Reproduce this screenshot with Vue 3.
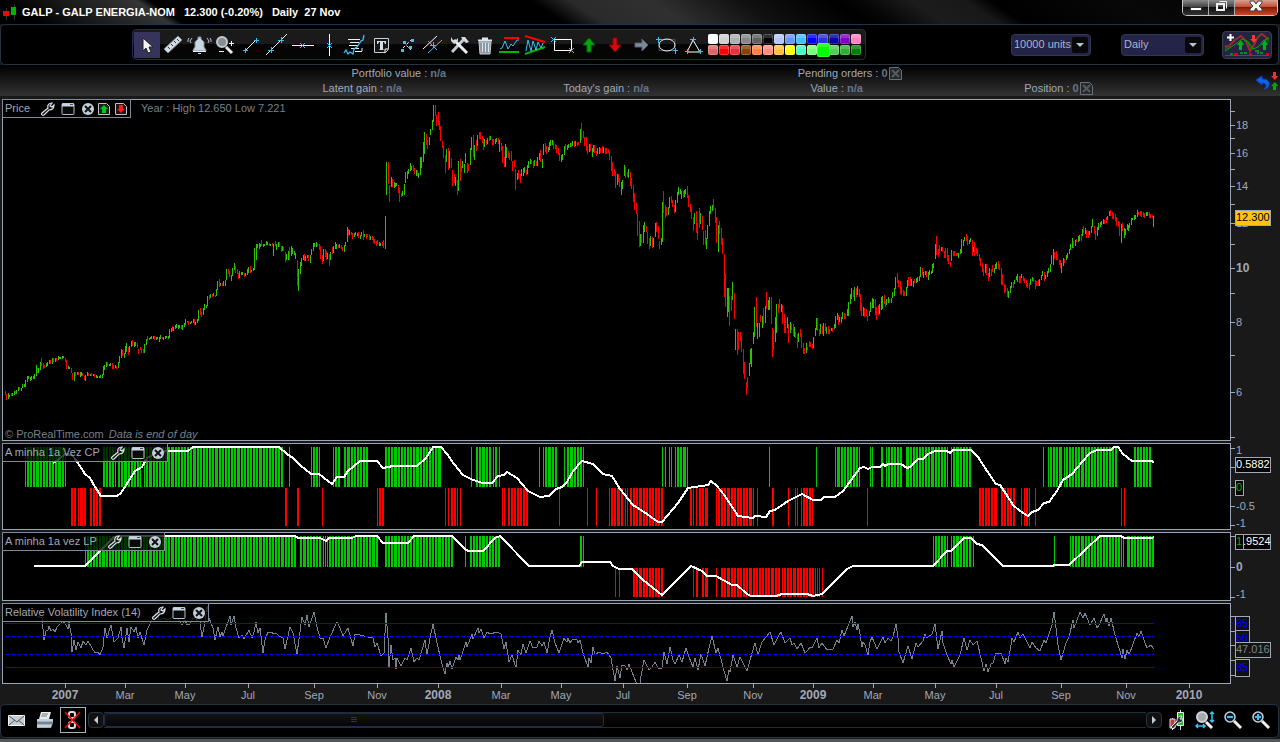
<script setup>
const ink = '#a0a8b8'

const tools = [
  { name: 'Select', body: '<path d="M9 6V19L12 16L14 21L17 20L15 15H19Z" fill="#f4f4f4" stroke="#222"/>' },
  { name: 'Ruler', body: '<path d="M4 17L18 4L22 8L8 21Z" fill="#d3dbe3" stroke="#7d8790"/><path d="M8 15l2 2M11 12l2 2M14 9l2 2M17 7l2 2" stroke="#333"/>' },
  { name: 'Alert', body: '<path d="M12 5h3v2l3 3v5l2 3v1H7v-1l2-3v-5l3-3z" fill="#c9d6e0" stroke="#7e8b96"/><path d="M7 19.500h13" stroke="#eef"/><path d="M12 21h3v1h-3z" fill="#dde"/><path d="M6 6l-2 3l1 2M3 6L2 8v2M21 6l2 3l-1 2M24 6l1 2v2" fill="none" stroke="#b8c4d0"/>' },
  { name: 'Zoom', body: '<circle cx="10" cy="10" r="5" fill="#8a8e92" stroke="#c2cad0" stroke-width="2"/><path d="M14 15l6 6" stroke="#e8eaec" stroke-width="3"/><path d="M17 11.500h5M19.500 9v5M7 19.500h5" stroke="#fff"/>' },
  { name: 'Segment', body: '<path d="M8 18L18 8" stroke="#e6eef6"/><path d="M5 18.500h5M7.500 16v5M16 8.500h5M18.500 6v5" stroke="#3cc0f8"/>' },
  { name: 'Line', body: '<path d="M2 23L23 2" stroke="#e6eef6"/><path d="M4 18.500h6M7.500 15v6M14 8.500h6M17.500 5v6" stroke="#3cc0f8"/>' },
  { name: 'Horizontal line', body: '<path d="M2 13.500H24" stroke="#fff"/><path d="M10 11l5 5M15 11l-5 5" stroke="#3cc0f8"/>' },
  { name: 'Vertical line', body: '<path d="M13.500 2V24" stroke="#fff"/><path d="M11 11l5 5M16 11l-5 5" stroke="#3cc0f8"/>' },
  { name: 'Annotation', body: '<path d="M6 7.500h12M8 10.500h9M7 13.500h9M9 16.500h8M13 19.500h7M20 16v3" stroke="#f0f0f0"/><path d="M2 21l2-3l2 4l2-2l3 2l1-5l3-2l4-6l2-1l1-5" fill="none" stroke="#3cc0f8" stroke-width="1.300"/>' },
  { name: 'Text', body: '<path d="M6.500 6.500h14v11l-3 3h-11z" fill="#161616" stroke="#c8d0d8"/><path d="M20 17h-3v4" fill="none" stroke="#fff"/><path d="M9 9h9v3h-1l-1-2h-1v7l1 1h-5l1-1v-7h-1l-1 2H9z" fill="#d8dde2"/>' },
  { name: 'Points', body: '<path d="M9 10l8 8M9 16l8-8" stroke="#e6eef6" stroke-dasharray="3 2"/><path d="M7 17h3v3H7zM17 7h3v3h-3zM9 9h3v3H9zM15 14h3v3h-3z" fill="#3cc0f8"/>' },
  { name: 'Parallel lines', body: '<path d="M3 17L17 4" stroke="#fff"/><path d="M8 21L22 8" stroke="#3cc0f8"/><path d="M8 9l9 9M10 13.500h6M13.500 10v6" stroke="#3cc0f8"/>' },
  { name: 'Settings', body: '<path d="M6 20L18 7" stroke="#c6ccd2" stroke-width="3"/><path d="M8 8l13 13" stroke="#eceff2" stroke-width="3"/><path d="M5 5v4l3 3l4-3V6L9 9L7 8zM15 5h4l4 5l-3 1l-3-3z" fill="#d5d9dd"/>' },
  { name: 'Delete', body: '<path d="M7 10h12l-1 12H8z" fill="#8e98a2" stroke="#c4ced8"/><path d="M10.500 11v9M13.500 11v9M16.500 11v9" stroke="#dce4ec"/><path d="M6 8.500h14M10 6.500h6" stroke="#dce4ec" stroke-width="2"/>' },
  { name: 'Support and resistance', body: '<path d="M6 6h15" stroke="#f00" stroke-width="2"/><path d="M1 20h20" stroke="#00b400" stroke-width="2"/><path d="M2 17l2-1l3-7l3 8l3-5l2 2l4-6h2" fill="none" stroke="#3cc0f8"/>' },
  { name: 'Triangle pattern', body: '<path d="M1 4L21 10" stroke="#f00" stroke-width="2"/><path d="M1 22L21 15" stroke="#00b400" stroke-width="2"/><path d="M2 19l2-11l3 11l2-10l3 9l2-8l3 6l2-5" fill="none" stroke="#3cc0f8"/>' },
  { name: 'Rectangle', body: '<path d="M4.500 7.500h17v11h-17z" fill="none" stroke="#fff"/><path d="M1 5l5 5M6 5l-5 5M19 16l5 5M24 16l-5 5" stroke="#3cc0f8"/>' },
  { name: 'Up arrow', body: '<path d="M13 6l6 7h-4v7h-4v-7H7z" fill="#00a80c" stroke="#006c08"/>' },
  { name: 'Down arrow', body: '<path d="M11 6h4v7h4l-6 7l-6-7h4z" fill="#d80a0a" stroke="#8c0404"/>' },
  { name: 'Right arrow', body: '<path d="M7 11h7V7l6 6l-6 6v-4H7z" fill="#7d8a98" stroke="#59636e"/>' },
  { name: 'Ellipse', body: '<path d="M5 7.500h16v11h-16z" fill="none" stroke="#444b54"/><ellipse cx="13" cy="13" rx="8" ry="6" fill="none" stroke="#e8ecf0"/><path d="M2 7.500h6M4.500 5v6M19 18.500h5M21.500 16v6" stroke="#3cc0f8"/>' },
  { name: 'Triangle', body: '<path d="M13 8L7 20h13z" fill="none" stroke="#fff"/><path d="M10 7.500h6M13.500 5v5M5 19.500h5M7.500 17v5M18 19.500h5M20.500 17v5" stroke="#3cc0f8"/>' }
]

const swatches = [
  'ffffff', 'd0d0d0', 'b0b0b0', '888888', '606060', '000000', 'b4c4ff', '6498ff', '40c0ff', '0000ff', '3030e0', '0000a0', '8000c0', 'ff80c0',
  'e06464', 'ff0000', 'e83038', '884400', 'ff8040', 'ff8c7c', 'ffc040', 'ffff00', '40ffc0', '78ff78', '00ff00', '50d050', '30b030', '008000'
].map(c => '#' + c)
const pickedColor = 24

// Daily ranges: column, direction (g up, r down), high and low
const priceData = `
5r391-395 6r394-400 8g393-399 9g395-397 11r393-396 12g393-396 14g391-395 15r391-394 16g390-394 18g387-391 19r387-390 21g388-391 22g384-388 24g384-387 25g380-387
27g376-382 28g376-379 30g377-381 31g376-380 33g376-379 34g374-379 36g365-376 37r368-373 38g368-373 40g362-370 41r358-366 43r363-369 44r365-368 46g363-367 47g362-366
49g360-364 50r360-364 52g358-364 53r358-362 55g358-362 56r358-361 58g356-360 59g357-359 60g357-359 62g356-359 63g356-358 65r358-362 66r360-369 68g366-369 69g367-369
71r368-373 72r373-380 74g372-381 75r372-376 77g372-375 78r372-375 80g372-377 81g372-376 82r373-376 84r376-380 85g375-381 87g372-376 88r373-376 90g374-376 91r373-376
93g374-376 94r374-377 96g375-378 97g376-378 99g376-378 100g375-378 102g374-378 103g366-375 104g365-370 106g362-367 107r362-366 109g364-366 110g363-366 112r363-369
113r365-369 115g365-368 116r366-369 118g362-368 119g356-363 121g349-358 122r350-356 124g353-358 125g346-354 126g343-352 128r347-355 129g346-352 131g341-347 132r340-346
134g342-347 135g342-346 137r343-348 138r349-354 140r347-350 141r349-353 143r349-353 144g344-353 146g339-345 147r336-341 149g338-340 150g337-339 151g336-339 153g336-339
154r336-340 156g337-340 157g337-339 159g337-342 160g335-339 162r337-339 163g337-340 165g336-339 166g336-338 168g336-339 169g329-338 171g328-332 172r326-331 173g327-331
175g325-329 176g324-328 178g325-329 179g325-328 181r325-329 182g325-330 184g323-327 185g319-325 187r321-323 188r321-325 190g322-324 191g321-323 193g319-323 194r319-325
195g322-325 197g319-323 198g310-321 200r308-315 201r312-317 203g308-315 204g304-310 206g305-308 207g296-306 209r295-300 210g294-298 212r294-297 213g293-296 215r295-297
216g289-296 217g281-290 219r279-287 220g283-286 222r283-286 223g281-286 225g280-286 226g269-280 228r269-274 229r271-277 231g275-281 232g268-276 234g263-270 235r266-273
237r269-274 238r273-279 239g271-278 241g272-275 242g272-275 244r273-277 245g273-276 247g269-275 248g267-273 250r266-273 251g270-272 253g268-271 254g248-270 256g244-260
257g244-248 259g243-249 260g244-247 261r240-246 263g244-247 264g244-246 266g241-245 267g242-245 269r243-246 270g244-246 272r243-246 273g244-256 275r241-246 276g244-250
278g242-247 279r242-247 281r246-252 282g246-251 283r247-251 285r252-262 286g254-260 288g251-260 289r247-260 291g246-256 292g248-254 294g251-255 295g253-259 297r260-286
298g269-291 300g262-274 301g258-266 303g255-260 304r254-261 305g256-261 307g255-258 308r255-261 310g255-263 311g249-255 313g243-251 314g243-247 316g242-247 317r243-247
319r244-250 320r246-259 322r255-264 323g249-261 325r249-257 326r251-260 327g253-259 329r254-266 330g252-260 332r247-254 333g246-253 335g242-249 336g244-249 338r245-248
339g244-248 341r245-249 342r247-251 344g245-252 345g242-246 347g227-242 348r229-236 349g230-235 351r232-235 352r233-239 354g233-237 355g232-235 357g233-236 358r232-238
360g235-239 361g232-236 363r230-240 364g234-237 366r234-239 367r234-237 369r234-240 370g236-240 372r236-240 373r237-243 374r239-244 376r241-246 377r240-244 379g242-246
380g243-246 382r242-246 383r240-248 385g216-249 386g162-195 388r162-184 389r185-202 391g177-187 392r179-187 394g182-188 395g183-187 396g183-186 398r185-193 399r188-202
401r193-197 402g191-196 404g184-195 405g172-183 407g171-179 408g169-174 410g163-171 411g166-170 413r165-171 414r168-174 416g170-176 417r170-176 418g173-178 420g157-175
421g157-168 423g142-162 424g132-154 426r134-145 427r140-149 429g137-145 430g129-135 432g120-130 433g105-122 435r105-116 436r115-126 438r112-125 439r121-130 440r126-141
442r141-148 443r146-158 445r155-173 446g149-162 448r148-170 449g151-168 451r158-168 452r170-186 454r174-183 455g177-186 457r180-195 458g161-191 460r159-181 461r166-172
462g161-168 464g164-173 465g153-163 467r163-173 468r164-171 470g148-165 471g137-150 473r135-157 474g145-160 476r140-151 477g135-146 479r132-139 480r132-139 482r136-143
483r138-150 484g139-147 486r140-145 487g138-144 489r136-141 490g136-140 492r139-145 493r139-145 495g139-144 496g138-142 498r138-144 499g140-152 501r143-151 502r146-163
504r157-167 505g144-167 506g147-158 508r151-158 509r153-160 511r151-161 512r161-171 514r160-167 515r169-190 517g173-180 518r170-179 520r174-183 521g169-176 523g168-176
524g167-173 526r170-175 527g165-174 528g161-168 530g159-164 531r160-164 533r161-168 534g160-166 536r161-166 537g157-166 539g153-160 540r150-162 542g159-168 543g144-155
545r143-152 546r146-154 548g147-152 549g142-150 550g140-146 552g140-145 553r141-149 555r144-149 556r145-153 558r148-155 559r153-161 561g155-162 562g154-160 564g146-155
565r144-150 567g145-150 568g144-148 570g143-147 571r143-147 572g141-146 574r141-147 575g141-146 577r142-146 578r142-145 580g129-143 581r123-140 583r131-138 584r137-146
586r137-151 587r146-154 589g144-152 590r144-151 592g148-157 593g145-152 594r145-153 596r151-156 597g148-154 599g147-154 600r148-153 602r146-153 603g147-153 605r148-154
606r148-154 608r149-153 609r151-160 611r156-171 612r162-176 614r169-176 615r171-188 617g174-185 618r174-182 619r178-187 621g182-195 622g180-189 624g165-176 625r167-178
627r172-177 628g169-178 630r172-186 631r178-189 633r185-202 634r193-210 636r203-214 637r213-236 639r221-247 640g234-246 641r234-243 643g225-243 644g222-232 646r226-232
647r232-244 649r238-249 650g236-246 652r237-248 653g238-247 655g223-237 656r222-232 658r226-239 659r241-249 661g238-245 662g202-242 663r191-213 665r205-218 666r207-216
668g207-215 669g197-208 671r196-203 672r200-207 674r205-213 675g200-212 677g192-203 678g187-195 680g189-194 681g191-199 683r191-198 684g190-197 685g189-194 687r186-198
688r195-207 690r204-212 691r207-219 693r217-231 694g213-224 696r211-233 697r223-240 699r208-228 700g213-224 702r216-230 703r231-245 705r230-245 706g238-249 707g225-239
709g211-226 710g206-214 712g205-211 713r199-210 715r208-223 716r217-243 718g225-252 719r221-234 721r228-245 722r238-254 724r254-297 725r273-307 727g288-317 728g288-312
729r296-326 731r296-311 732g282-300 734r293-319 735g329-350 737r329-355 738r332-350 740r332-341 741r336-352 743r349-374 744r362-379 746r382-395 747r377-388 749g363-376
750g349-364 751g348-367 753g332-344 754g307-337 756r297-327 757g323-339 759g323-337 760r315-322 762g316-328 763r308-325 765g306-323 766r292-309 768g300-310 769g297-310
771r297-324 772r328-357 773r330-350 775g317-342 776g304-333 778r304-313 779r299-308 781g304-312 782r305-324 784r314-333 785r318-333 787g317-328 788r324-343 790g322-333
791r324-330 793r324-336 794g327-337 795r332-338 797r334-348 798g333-342 800r329-337 801r333-348 803r343-354 804r348-354 806g343-353 807r347-350 809r341-347 810r342-347
812r344-349 813g337-348 815g328-336 816g318-330 817r318-331 819r329-336 820g324-334 822r326-334 823g323-336 825r323-331 826g327-334 828r326-334 829r329-334 831g328-331
832r328-332 834g324-329 835g316-328 837g313-320 838r315-325 839g317-322 841g317-323 842g312-319 844r313-319 845r314-319 847g309-316 848g302-316 850g294-304 851g288-299
853r290-297 854g287-301 856r288-297 857g286-295 859r289-297 860r294-311 861r303-316 863g307-316 864r308-317 866r309-316 867r316-321 869g311-316 870g302-312 872g298-308
873g299-308 875r299-315 876r307-320 878r305-315 879g304-314 881g297-310 882g296-309 884r295-304 885r301-307 886g299-305 888g297-303 889r299-303 891g298-303 892g292-298
894g288-296 895g277-289 897r273-283 898r280-287 900r281-294 901r287-295 903r290-296 904r291-296 906g287-296 907g280-288 908r277-286 910r277-286 911g279-286 913g281-287
914r279-283 916g278-283 917g277-282 919g276-281 920g267-277 922r268-275 923g272-278 925g271-275 926r271-277 928g272-280 929g270-275 931g271-274 932g264-273 933g263-268
935g244-259 936r236-255 938r249-257 939r245-253 941g247-251 942r247-252 944r251-258 945r248-258 947r248-261 948r255-264 950r262-267 951g250-261 953r251-256 954r251-256
956r253-256 957r253-256 958g253-258 960g249-254 961g239-253 963g240-246 964g237-241 966r234-241 967r236-245 969g240-244 970g238-242 972r240-256 973g247-252 974r242-256
976r248-254 977r249-256 979r254-261 980r258-266 982r263-272 983r268-276 985g264-273 986r264-275 988r273-281 989g268-277 991r269-276 992r265-272 994g268-273 995g264-269
996g262-269 998r261-269 999r264-270 1001r268-285 1002r274-285 1004r284-293 1005r285-292 1007r288-297 1008g291-298 1010g286-293 1011g282-288 1013r282-288 1014g280-284
1016g276-280 1017g274-282 1019r276-283 1020r276-283 1021g274-278 1023r276-281 1024r278-283 1026r280-287 1027r283-288 1029r283-290 1030g279-285 1032g277-281 1033r278-282
1035r280-289 1036r281-286 1038r280-286 1039g279-286 1041g275-280 1042g271-276 1044r272-281 1045g275-279 1047g271-277 1048g268-273 1050g264-272 1051g255-264 1053g249-265
1054r252-259 1056r251-260 1057r254-260 1059r260-265 1060r260-268 1061g263-273 1063g258-266 1064r259-263 1066g255-260 1067g253-258 1069g249-254 1070g244-250 1072g238-248
1073r241-248 1075g240-246 1076r239-242 1078g236-242 1079g235-241 1081r234-241 1082g229-236 1083r226-233 1085g228-234 1086r230-238 1088r231-238 1089g231-235 1091g226-233
1092g219-227 1094r226-234 1095r231-240 1097g227-236 1098g223-230 1100g222-227 1101g221-225 1103g219-224 1104r220-224 1106r217-223 1107g216-220 1109g211-216 1110r210-216
1112r212-219 1113r213-219 1115r214-221 1116r217-226 1118r221-227 1119r222-236 1121g224-243 1122r223-231 1124g228-238 1125g229-235 1127g224-230 1128g225-231 1129g223-228
1131g218-225 1132g218-220 1134g215-220 1135g215-219 1137g210-217 1138r212-215 1140r211-216 1141r211-217 1143r212-217 1144r213-218 1146g212-216 1147g212-216 1149r212-218
1150r214-218 1152r215-218 1153g216-227`

const candles = [...priceData.matchAll(/(\d+)([gr])(\d+)-(\d+)/g)].map(m => ({ x: +m[1], dir: m[2], hi: +m[3], lo: +m[4] }))
const columns = candles.map(c => c.x)
const candlePath = dir => candles.filter(c => c.dir === dir).map(c => `M${c.x + 0.5} ${c.hi}V${c.lo}`).join('')

// Bars for every trading day inside the listed ranges
function bars(ranges, top, bottom) {
  return ranges.trim().split(/\s+/).map(r => {
    const [a, b = a] = r.split('-').map(Number)
    const xs = a === b ? [a] : columns.filter(x => x >= a && x <= b)
    return xs.map(x => `M${x + 0.5} ${top}V${bottom}`).join('')
  }).join('')
}

const cpUp = bars('25-65 103-115 118-138 140 144-282 289 311-319 333-339 344-367 385-440 471 476-490 493-496 499 539 543-556 564 567-583 662 665 669 671 675-687 769 816 835-859 870 872 881-882 886-901 906-947 951-971 1043 1048-1061 1064-1117 1133-1151', 447, 487)
const cpDown = bars('71-75 78-86 90-101 285-286 297-298 322 377-383 445 448 451-457 460 502 504 508-527 559 587 596 609-623 625 627 630-662 690-693 696 699-707 716-751 753 757 772-773 788 795 797 801-812 867 979-996 1001-1015 1021 1024-1029 1035 1121 1124', 488, 526)
const lpUp = bars('85-296 300-321 323-325 327-377 385-452 465 470-500 580-581 583 933-947 951-971 973 1054 1070-1121 1123 1126-1154', 536, 567)
const lpDown = bars('615 619 633-662 693 696-697 702-707 716 721-776 778-779 782-815 817 819 822', 568, 597)

const cpLine = '53,463 58,460 65,454 72,455 76,460 85,474 90,478 95,487 101,496 117,496 121,493 135,471 142,467 147,458 157,453 167,451 188,451 193,447 279,447 287,454 293,458 300,465 311,474 319,474 332,484 337,477 344,477 348,471 360,461 377,461 383,468 393,466 417,466 425,459 430,452 433,447 441,447 447,454 454,464 463,475 473,480 483,483 492,483 498,476 504,475 507,472 517,478 528,491 540,497 549,496 556,489 562,487 567,482 573,471 582,461 593,464 603,474 612,476 620,489 633,505 647,514 658,522 662,522 678,503 688,488 708,485 711,481 717,486 725,496 738,516 753,518 755,516 766,517 770,511 775,510 788,501 802,494 813,500 821,500 824,497 835,497 843,491 860,468 864,467 868,469 872,467 880,467 883,464 885,466 888,464 901,464 907,468 910,467 918,459 923,459 928,454 935,451 947,451 950,453 953,450 971,450 978,457 987,471 996,484 1000,485 1008,497 1013,505 1020,511 1028,516 1032,512 1038,510 1044,503 1049,502 1057,491 1063,480 1072,474 1082,462 1090,453 1097,450 1111,450 1114,447 1118,447 1123,454 1132,461 1152,461 1154,463'
const lpLine = '34,566 85,566 114,537 118,536 295,536 298,538 320,538 326,541 329,538 352,538 356,536 377,536 383,543 408,543 414,536 452,536 465,549 468,551 483,551 495,538 500,536 529,566 579,566 582,562 610,562 613,566 619,569 632,569 643,580 662,595 691,566 702,571 707,576 716,576 732,585 737,585 747,594 751,596 776,596 782,594 807,594 813,596 822,594 847,569 853,566 933,566 947,551 951,551 964,538 971,538 977,544 982,545 1003,566 1053,566 1054,565 1069,565 1100,536 1121,536 1124,538 1152,538 1154,537'
const rviLine = '37,616 42,618 44,640 46,631 48,630 49,626 51,631 53,629 55,632 57,627 63,621 66,625 68,629 69,622 71,633 72,652 74,640 76,650 78,642 81,648 83,641 86,645 88,641 92,648 95,653 98,652 100,655 103,647 105,628 107,638 111,625 114,642 118,638 121,627 122,638 124,648 127,628 129,642 131,627 134,632 136,627 138,638 140,632 144,645 147,630 152,620 156,612 159,620 163,618 168,620 174,616 178,618 182,625 185,620 187,625 190,624 193,618 200,622 202,637 205,622 207,606 209,618 213,628 215,640 218,627 220,637 222,632 223,636 230,616 231,625 234,616 236,628 239,638 242,635 244,639 249,630 252,638 254,632 256,622 258,633 260,628 263,653 265,640 268,632 277,634 279,636 283,638 285,649 290,627 293,633 297,654 300,632 302,617 305,625 307,615 309,627 314,612 317,627 320,638 323,638 326,648 330,637 337,622 340,628 343,636 348,628 353,646 355,634 360,635 368,637 373,638 375,647 377,643 381,656 384,653 386,613 388,638 389,667 391,645 393,660 395,658 396,669 397,658 401,666 405,658 407,660 411,648 414,662 417,658 419,660 425,640 427,655 430,638 433,624 437,643 441,660 445,674 447,663 448,668 450,661 452,669 456,657 458,660 459,655 460,660 466,642 467,647 472,634 473,639 478,628 479,633 481,629 484,638 487,632 490,634 497,632 501,634 504,649 506,642 509,662 512,655 516,668 518,650 521,655 523,644 526,653 530,641 533,648 537,647 539,641 542,646 544,642 547,653 550,637 552,630 555,643 559,653 564,638 567,642 568,638 570,643 573,639 577,640 578,643 580,640 583,653 588,667 589,658 591,663 593,647 595,655 599,652 603,654 607,652 611,658 615,681 617,666 620,678 622,665 625,666 627,670 629,664 632,672 636,682 640,690 641,676 644,660 649,670 652,667 655,662 658,668 662,668 664,652 667,664 670,647 673,660 675,664 679,655 682,662 686,648 689,657 693,667 695,658 698,670 701,654 705,666 709,648 712,636 716,653 718,648 723,667 727,681 729,670 730,672 733,655 737,667 740,657 747,671 752,653 755,643 758,655 762,642 770,632 774,645 778,637 781,632 785,643 790,638 792,645 794,643 797,649 801,643 805,653 808,650 810,647 812,648 817,638 819,648 822,643 827,650 833,649 837,640 839,643 842,630 844,636 852,616 853,627 855,622 857,630 858,624 860,634 862,647 863,642 865,645 868,655 870,642 872,637 877,649 883,637 885,643 888,638 891,641 893,637 896,624 898,638 899,652 903,663 908,646 912,659 916,643 918,647 923,641 925,634 927,638 932,634 935,624 938,649 942,631 943,643 947,655 951,664 952,660 954,667 960,655 964,638 967,650 970,640 973,645 977,641 982,662 984,671 986,664 988,672 991,664 993,663 996,653 1001,653 1005,664 1006,658 1008,662 1011,645 1012,638 1014,642 1018,632 1020,638 1023,634 1030,648 1032,642 1036,648 1040,651 1044,640 1046,643 1050,631 1052,625 1054,612 1056,628 1058,645 1061,660 1066,643 1069,637 1073,620 1074,628 1080,612 1083,618 1085,613 1090,625 1094,618 1097,628 1099,625 1104,614 1106,622 1107,618 1109,626 1111,618 1115,635 1119,648 1122,658 1123,649 1125,659 1127,650 1129,655 1137,633 1139,637 1141,631 1145,643 1147,648 1151,645 1154,649'

// Axis marks are given in pixels from the panel's top edge
const panels = [
  {
    id: 'price', title: 'Price', box: '3 100 1227 340', h: 342, pages: true,
    ticks: [12, 26, 39, 54, 70, 87, 105, 124, 145, 169, 194, 223, 256, 293, 338],
    labels: [{ y: 26, t: '18' }, { y: 54, t: '16' }, { y: 87, t: '14' }, { y: 124, t: '12' }, { y: 169, t: '10', bold: true }, { y: 223, t: '8' }, { y: 293, t: '6' },
      { y: 118, t: '12.300', w: 36, h: 15, bg: '#ffc40c', c: '#000' }]
  },
  {
    id: 'cp', title: 'A minha 1a Vez CP', box: '3 444 1227 85', h: 87, ticks: [5, 24, 44, 63, 82],
    labels: [{ y: 7, t: '1' }, { y: 63, t: '-0.5' }, { y: 80, t: '-1' }, { y: 21, t: '0.5882', w: 36, h: 15, c: '#fff', bg: '#000' }, { y: 44, t: '0', w: 9, h: 15, c: '#00b400', bg: '#000' }]
  },
  {
    id: 'lp', title: 'A minha 1a vez LP', box: '3 533 1227 67', h: 69, ticks: [4, 35, 65],
    labels: [{ y: 35, t: '0', bold: true }, { y: 62, t: '-1' }, { y: 9, t: '.9524', dx: 7, w: 36, h: 15, c: '#fff', bg: '#000' }, { y: 9, t: '1', w: 9, h: 15, c: '#00b400', bg: '#000' }]
  },
  {
    id: 'rvi', title: 'Relative Volatility Index (14)', box: '3 604 1227 79', h: 81, ticks: [13, 28, 42, 57, 72],
    labels: [{ y: 20, t: '65', w: 15, h: 15, c: '#0000ff', bg: '#101010' }, { y: 34, t: '56', w: 15, h: 15, c: '#0000ff', bg: '#101010' }, { y: 64, t: '35', w: 15, h: 17, c: '#0000ff', bg: '#101010' },
      { y: 46, t: '47.016', w: 36, h: 15, c: '#80858c', bg: '#141414' }]
  }
]
const pct = (v, total) => v / total * 100 + '%'

const months = [[65, '2007'], [125, 'Mar'], [185, 'May'], [248, 'Jul'], [314, 'Sep'], [377, 'Nov'], [438, '2008'], [501, 'Mar'], [561, 'May'], [623, 'Jul'], [687, 'Sep'], [753, 'Nov'], [813, '2009'], [873, 'Mar'], [935, 'May'], [996, 'Jul'], [1061, 'Sep'], [1126, 'Nov'], [1189, '2010']]
  .map(([x, t]) => ({ x: pct(x, 1280), t, year: t.length === 4 }))
</script>

<template>
  <div class="app">
    <header class="titlebar">
      <svg class="logo" width="16" height="18" viewBox="0 0 16 18" aria-hidden="true">
        <path d="M3.500 5v12M11.500 1v16" stroke="#333" /><path d="M0 8h6v5H0z" fill="#f00" /><path d="M8 4h5v8h-5z" fill="#00b400" />
      </svg>
      <h1>GALP - GALP ENERGIA-NOM</h1><span>12.300 (-0.20%)</span><span>Daily&nbsp; 27 Nov</span>
      <div class="winbtns">
        <button aria-label="Minimize"><svg width="25" height="15"><path d="M7.500 7.500h11v3h-11z" fill="#fff" stroke="#333" /></svg></button>
        <button aria-label="Restore"><svg width="25" height="15"><path d="M10.500 1.500h7v7" fill="none" stroke="#eee" stroke-width="1" /><path d="M8 4h7v6H8z" fill="none" stroke="#eee" stroke-width="2" /></svg></button>
        <button class="close" aria-label="Close"><svg width="42" height="15"><path d="M15 1h4l2 3l2-3h4v2l-3 3l3 3v2h-4l-2-3l-2 3h-4V9l3-3l-3-3z" fill="#f5f5f5" stroke="#444" /></svg></button>
      </div>
    </header>

    <nav class="toolbar" aria-label="Drawing tools">
      <div class="tools">
        <button v-for="(tool, i) in tools" :key="tool.name" class="tool" :class="{ on: i === 0 }" :aria-label="tool.name">
          <svg width="26" height="26" viewBox="0 0 26 26" fill="none" v-html="tool.body"></svg>
        </button>
        <div class="palette">
          <button v-for="(c, i) in swatches" :key="i" class="swatch" :class="{ picked: i === pickedColor }" :style="{ backgroundColor: c }" :aria-label="'Colour ' + c"></button>
        </div>
      </div>
      <div class="picker units">
        <select aria-label="Units"><option>10000 units</option></select>
        <svg width="16" height="16"><path d="M4 6h8l-4 4z" fill="#b8c4d4" /></svg>
      </div>
      <div class="picker frame">
        <select aria-label="Time frame"><option>Daily</option></select>
        <svg width="16" height="16"><path d="M4 6h8l-4 4z" fill="#b8c4d4" /></svg>
      </div>
      <button class="indicator" aria-label="Add indicator">
        <svg width="46" height="26" viewBox="0 0 46 26" fill="none">
          <path d="M1 12l4 4l-4 3zM20 9l6 11l3-4l-4-7zM40 8l5-3v6z" fill="#0a5a14" />
          <path d="M1 15l4-1l6-6l6-4l5 5l4 10l4-6l4-8l4-3l6 5" stroke="#a02828" stroke-width="2" /><path d="M1 19l6-4l6-4l5-4l5 2l6 8l5-2l5-6l6-3" stroke="#00a814" />
          <path d="M6.500 2v7M3 5.500h7" stroke="#fff" stroke-width="2" /><path d="M28 3h3v4h2l-3 4l-4-4h2z" fill="#f33" /><path d="M15 18v-5h-2l4-5l3 5h-2v5zM39 18v-5h-2l4-5l3 5h-2v5z" fill="#00b418" />
          <path d="M6 22h3M16 21h3M20 21h3M31 19h3v3M36 21h3" stroke="#0a8a1c" stroke-width="2" /><path d="M10 22h4M25 22h3M42 22h3" stroke="#e00000" stroke-width="2" /><path d="M1 23.500h44" stroke="#3838ff" />
        </svg>
      </button>
    </nav>

    <section class="account" aria-label="Account">
      <div class="row first">
        <p>Portfolio value : <b>n/a</b></p>
        <p>Pending orders : <b>0</b><button class="xbtn" aria-label="Cancel orders"><svg width="13" height="13"><path d="M.5.5h9l3 3v9H.5z" fill="#24282c" stroke="#6a7078" /><path d="M3 3l7 7M10 3l-7 7" stroke="#555b62" stroke-width="2" /></svg></button></p>
      </div>
      <div class="row second">
        <p>Latent gain : <b>n/a</b></p>
        <p>Today's gain : <b>n/a</b></p>
        <p>Value : <b>n/a</b></p>
        <p>Position : <b>0</b><button class="xbtn" aria-label="Close position"><svg width="13" height="13"><path d="M.5.5h9l3 3v9H.5z" fill="#24282c" stroke="#6a7078" /><path d="M3 3l7 7M10 3l-7 7" stroke="#555b62" stroke-width="2" /></svg></button></p>
      </div>
      <button class="undo" aria-label="Reverse position">
        <svg width="24" height="20" viewBox="0 0 24 20"><path d="M1 9l6-4v3c6 0 8 3 7 6c0 2-2 4-5 4c4-3 2-6-2-6v2z" fill="#0a64f0" stroke="#1040c0" /><path d="M18 1h3v4h2l-3 4l-4-4h2z" fill="#f03030" /><path d="M18 19h3v-4h2l-3-4l-4 4h2z" fill="#00a818" /></svg>
      </button>
    </section>

    <main class="charts">
      <section v-for="p in panels" :key="p.id" class="panel" :class="p.id">
        <div class="plot">
          <svg class="marks" :viewBox="p.box" preserveAspectRatio="none" shape-rendering="crispEdges" fill="none" role="img" :aria-label="p.title + ' chart'">
            <template v-if="p.id === 'price'">
              <path :d="candlePath('g')" stroke="#2fc400" /><path :d="candlePath('r')" stroke="#f00" />
            </template>
            <template v-else-if="p.id === 'cp'">
              <path :d="cpUp" stroke="#00c800" /><path :d="cpDown" stroke="#f00" /><polyline :points="cpLine" stroke="#fff" stroke-width="2" />
            </template>
            <template v-else-if="p.id === 'lp'">
              <path :d="lpUp" stroke="#00c800" /><path :d="lpDown" stroke="#f00" /><polyline :points="lpLine" stroke="#fff" stroke-width="2" />
            </template>
            <template v-else>
              <polyline :points="rviLine" stroke="#76828f" />
              <path d="M5 623.500H1154M5 667.500H1154" stroke="#00f" /><path d="M5 636.500H1154M5 654.500H1154" stroke="#00f" stroke-dasharray="4 2" />
            </template>
          </svg>
          <div class="head">
            <h2>{{ p.title }}</h2>
            <button class="hbtn" aria-label="Settings"><svg width="14" height="14" viewBox="0 0 14 14"><path d="M1 11l6-5c-1-3 1-5 4-5l-2 3l2 1l2-2c0 3-1 5-5 5l-5 5c-2 1-3-1-2-2z" fill="#111" stroke="#dfe6ee" stroke-width="1.200" /></svg></button>
            <button class="hbtn" aria-label="Maximize"><svg width="14" height="14" viewBox="0 0 14 14"><rect x="1" y="1.500" width="12" height="11" rx="1" fill="#0a0a0a" stroke="#b4c0cc" /><path d="M1 3h12" stroke="#c8d4e0" stroke-width="3" /><path d="M9 2.500h3" stroke="#445" /></svg></button>
            <button class="hbtn" aria-label="Close"><svg width="14" height="14" viewBox="0 0 14 14"><circle cx="7" cy="7" r="6" fill="#c4ced8" /><path d="M4 4l6 6M10 4l-6 6" stroke="#111" stroke-width="2" /></svg></button>
            <template v-if="p.pages">
              <button class="hbtn page" aria-label="Buy"><svg width="14" height="14" viewBox="0 0 14 14"><path d="M1.500 1.500h8l3 3v8h-11z" fill="#142014" stroke="#b8c4d0" /><path d="M7 3l4 4H9v4H5V7H3z" fill="#00c818" /></svg></button>
              <button class="hbtn" aria-label="Sell"><svg width="14" height="14" viewBox="0 0 14 14"><path d="M1.500 1.500h8l3 3v8h-11z" fill="#201414" stroke="#b8c4d0" /><path d="M7 11l4-4H9V3H5v4H3z" fill="#f02020" /></svg></button>
            </template>
          </div>
          <template v-if="p.pages">
            <p class="range">Year : High 12.650 Low 7.221</p>
            <p class="credit">© ProRealTime.com <i>Data is end of day</i></p>
          </template>
        </div>
        <svg class="axis" shape-rendering="crispEdges">
          <line v-for="t in p.ticks" :key="t" x1="0" x2="4" :y1="pct(t + 0.5, p.h)" :y2="pct(t + 0.5, p.h)" :stroke="ink" />
          <svg v-for="(l, i) in p.labels" :key="i" x="0" :y="pct(l.y, p.h)" overflow="visible">
            <rect v-if="l.w" x="4.500" :y="0.5 - Math.floor(l.h / 2)" :width="l.w - 1" :height="l.h" :fill="l.bg" :stroke="ink" />
            <text :x="5 + (l.dx || 0)" y="4" :fill="l.c || ink" :class="{ strong: l.bold }">{{ l.t }}</text>
          </svg>
        </svg>
      </section>
      <svg class="time" shape-rendering="crispEdges">
        <template v-for="(m, i) in months" :key="i">
          <line :x1="m.x" :x2="m.x" y1="0" y2="4" :stroke="ink" />
          <text :x="m.x" y="15" text-anchor="middle" :fill="ink" :class="{ strong: m.year }">{{ m.t }}</text>
        </template>
      </svg>
    </main>

    <footer class="bottombar">
      <button class="bbtn" aria-label="Mail"><svg width="20" height="20"><path d="M1.500 5.500h16v10h-16z" fill="#c4ccd4" stroke="#f2f4f6" /><path d="M2 6l8 6l7-6M2 15l6-5M17 15l-6-5" fill="none" stroke="#555" /></svg></button>
      <button class="bbtn" aria-label="Print"><svg width="20" height="20"><path d="M6 2h10l-2 7H4z" fill="#e8ecf0" /><path d="M7 4h6M6 6h6" stroke="#777" /><path d="M2 9h16v4l-2 5H2z" fill="#9fb0c0" /><path d="M2 10h16M2 16h14" stroke="#e8eef4" /><path d="M2 13h16" stroke="#4a5866" /></svg></button>
      <button class="bbtn boxed" aria-label="Unlink"><svg width="24" height="24"><rect x="8" y="4" width="6" height="6" rx="2" fill="none" stroke="#ddd" stroke-width="2" /><rect x="8" y="14" width="6" height="6" rx="2" fill="none" stroke="#ddd" stroke-width="2" /><path d="M11 9v6" stroke="#ddd" stroke-width="2" /><path d="M4 4l15 16M19 4L4 20" stroke="#f00" stroke-width="1.500" /></svg></button>
      <div class="scroll">
        <button class="arrow" aria-label="Scroll left"><svg width="14" height="14"><path d="M9 3v8L5 7z" fill="#c0ccd8" /></svg></button>
        <div class="track"><div class="thumb"><svg width="8" height="8"><path d="M1 1.500h6M1 3.500h6M1 5.500h6" stroke="#303060" /></svg></div></div>
        <button class="arrow" aria-label="Scroll right"><svg width="14" height="14"><path d="M5 3v8l4-4z" fill="#c0ccd8" /></svg></button>
      </div>
      <button class="bbtn" aria-label="Chart style"><svg width="20" height="20"><path d="M13.500 0v20M5.500 8v12" stroke="#dde" /><path d="M10.500 2.500h6v13h-6z" fill="#28b428" stroke="#dfe" /><path d="M3 9h5v9H3z" fill="#c03838" stroke="#dde" /><path d="M4 17l6-6c0-4 2-5 5-5l-2 3h3c0 3-3 4-5 4l-5 6z" fill="#2a2f36" stroke="#e8eef4" /></svg></button>
      <button class="bbtn" aria-label="Fit"><svg width="20" height="20"><circle cx="7" cy="7" r="5" fill="#a6a8aa" stroke="#d0d6da" stroke-width="2" /><path d="M11 12l6 6" stroke="#f0f0f0" stroke-width="3" /><path d="M17 2v10M15 4l2-2l2 2M15 10l2 2l2-2M1 16h9M3 14l-2 2l2 2M8 14l2 2l-2 2" fill="none" stroke="#3cc0f8" stroke-width="1.500" /></svg></button>
      <button class="bbtn" aria-label="Zoom out"><svg width="20" height="20"><circle cx="7" cy="7" r="5" fill="#0a1a24" stroke="#c8d0d8" stroke-width="1.500" /><path d="M4 7h6" stroke="#3cc0f8" stroke-width="2" /><path d="M11 11l7 7" stroke="#f0f0f0" stroke-width="3" /></svg></button>
      <button class="bbtn" aria-label="Zoom in"><svg width="20" height="20"><circle cx="7" cy="7" r="5" fill="#0a1a24" stroke="#c8d0d8" stroke-width="1.500" /><path d="M4 7h6M7 4v6" stroke="#3cc0f8" stroke-width="2" /><path d="M11 11l7 7" stroke="#f0f0f0" stroke-width="3" /></svg></button>
    </footer>
  </div>
</template>

<style>
html, body { background: #191919; }
</style>

<style scoped>
.app, .app * { box-sizing: border-box; }
.app {
  display: flex; flex-direction: column; min-height: 100vh;
  background: #191919; color: #a0a8b8;
  font-family: "Liberation Sans", Arial, sans-serif; font-size: 11px; line-height: 15px;
  border-bottom: 3px solid #55555a;
}
button { padding: 0; border: 0; background: none; display: block; flex: none; cursor: pointer; }
button svg { display: block; }
h1, h2, p { margin: 0; font-size: 11px; white-space: nowrap; }
.titlebar {
  display: flex; align-items: center; gap: 9px; height: 24px; padding-left: 3px; color: #fff; font-weight: bold;
  background: linear-gradient(34deg, #000 3%, #181818 7%, #343434 13%, #000 14%, #000 43%, #2a2a2a 46%, #303030 52%, #101010 59%, #000 66%, #060606 68%, #1c1c1c 72%, #181818 76%, #000 78%, #080808 88%, #000 100%);
}
.logo { margin-right: -6px; }
.winbtns { display: flex; align-self: flex-start; margin-left: auto; margin-right: 2px; border: 1px solid #c8c8c8; border-top: 0; border-radius: 0 0 5px 5px; overflow: hidden; }
.winbtns button { height: 15px; background: linear-gradient(#888, #444 45%, #111 50%, #333); border-right: 1px solid #aaa; }
.winbtns .close { border-right: 0; background: linear-gradient(#d8a090, #c05038 45%, #8c1800 50%, #c84828); }

.toolbar { display: flex; align-items: center; height: 41px; margin-right: 1px; padding: 0 6px 0 131px; background: #000; border: 1px solid #263442; border-radius: 5px; }
.tools { display: flex; align-items: center; height: 31px; padding: 0 3px 0 1px; border: 1px solid #262a50; border-radius: 4px; background: linear-gradient(#1a1a1a 50%, #050505 50%); }
.tool.on { background: #36345c; }
.palette { display: grid; grid-template-columns: repeat(14, 11px); grid-auto-rows: 11px; margin-left: 2px; }
.swatch { margin: 0 1px 1px 0; border-radius: 2px; box-shadow: inset 0 0 0 1px rgb(255 255 255 / 20%), inset 0 4px 0 rgb(255 255 255 / 18%); }
.swatch.picked { z-index: 1; margin: -2px -1px -1px -1px; }
.picker { position: relative; height: 22px; border: 1px solid #2c3a54; border-radius: 4px; background: #242348; }
.picker select { width: 100%; height: 20px; padding: 0 2px; border: 0; background: none; color: #a8b4c8; font: inherit; appearance: none; }
.picker svg { position: absolute; right: 2px; top: 2px; background: #080808; border-radius: 2px; pointer-events: none; }
.units { width: 80px; margin-left: auto; margin-right: 30px; }
.frame { width: 83px; margin-right: 18px; }
.indicator { border: 1px solid #38404e; border-radius: 4px; background: #242440; padding: 0 1px; }

.account { position: relative; height: 31px; padding-top: 1px; margin-bottom: 3px; background: linear-gradient(#000, #333); }
.row { display: flex; justify-content: space-evenly; height: 15px; }
.first { padding-right: 27px; }
.second { padding: 0 26px 0 161px; }
.row p { display: flex; align-items: center; gap: 3px; }
.row b { color: #64748c; }
.xbtn { margin-left: -2px; }
.undo { position: absolute; right: 1px; top: 6px; }

.charts { display: flex; flex-direction: column; gap: 2px; flex: 1; }
.panel { display: grid; grid-template-columns: 1fr 49px; grid-template-rows: minmax(0, 1fr); margin-left: 2px; }
.price { flex: 1; min-height: 342px; }
.cp { height: 87px; }
.lp { height: 69px; }
.rvi { height: 81px; }
.plot { position: relative; border: 1px solid #9aa4b4; background: #000; min-width: 0; }
.marks { position: absolute; inset: 0; width: 100%; height: 100%; }
.head { position: absolute; top: -1px; left: -1px; display: flex; align-items: center; gap: 6px; height: 19px; padding: 0 2px; border: 1px solid #80899a; background: rgb(0 0 0 / 75%); }
.head h2 { font-weight: normal; margin-right: 5px; }
.page { margin-left: -4px; }
.page + .hbtn { margin-left: -3px; }
.range { position: absolute; left: 138px; top: 1px; color: #76808c; }
.credit { position: absolute; left: 2px; bottom: -2px; color: #76808c; }
.credit i { margin-left: 2px; }
.axis { width: 49px; height: 100%; overflow: visible; }
.axis text, .time text { font-size: 11px; }
.axis .strong, .time .strong { font-size: 12px; font-weight: bold; }
.time { width: 100%; height: 20px; margin-top: -2px; }

.bottombar { display: flex; align-items: center; gap: 8px; height: 34px; margin: 0 1px 1px 0; padding: 0 7px 2px 6px; background: #000; border: 1px solid #263442; border-radius: 5px; }
.boxed { border: 1px solid #aab2bc; margin-left: -3px; }
.scroll { display: flex; flex: 1; height: 16px; margin-left: -6px; margin-right: -3px; }
.arrow { width: 16px; border: 1px solid #263442; border-radius: 4px; background: #101010; }
.track { flex: 1; border: 1px solid #202e3c; border-width: 1px 0; background: linear-gradient(#0c0c0c, #000); }
.thumb { display: flex; align-items: center; justify-content: center; width: 48%; height: 14px; border: 1px solid #262850; border-radius: 3px; background: linear-gradient(#141414, #060606); }
</style>
